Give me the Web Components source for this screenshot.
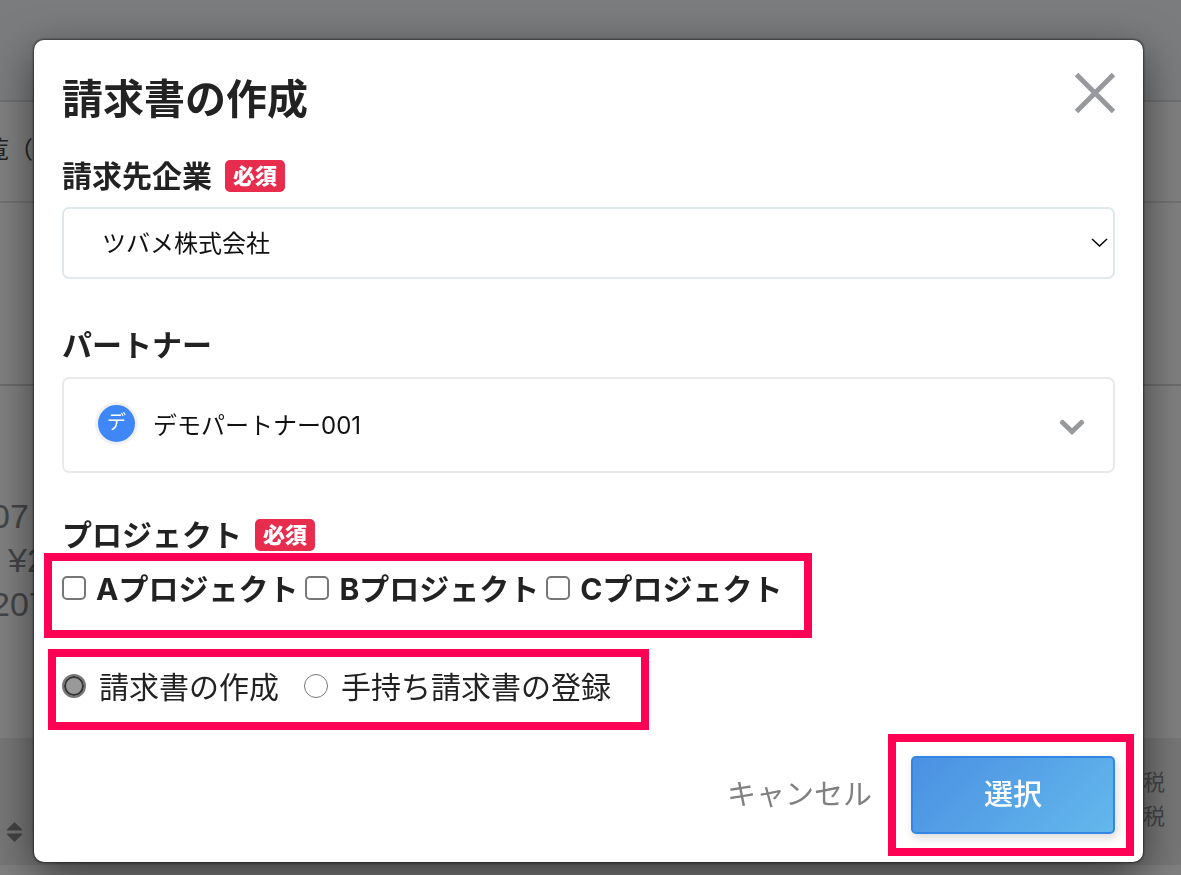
<!DOCTYPE html>
<html lang="ja">
<head>
<meta charset="utf-8">
<meta name="viewport" content="width=device-width, initial-scale=1">
<title>請求書の作成</title>
<style>
  body { margin: 0; font-family: Inter, "Noto Sans CJK JP", sans-serif; color: #222; }
</style>
</head>
<body>
<invoice-page></invoice-page>
<modal-dialog heading="請求書の作成">
  <form-field label="請求先企業" required>
    <company-select></company-select>
  </form-field>
  <form-field label="パートナー">
    <partner-picker initial="デ" name="デモパートナー001"></partner-picker>
  </form-field>
  <form-field label="プロジェクト" required flush>
    <highlight-frame class="projects">
      <choice-group kind="checkbox" name="project" options="Aプロジェクト,Bプロジェクト,Cプロジェクト"></choice-group>
    </highlight-frame>
  </form-field>
  <highlight-frame class="mode">
    <choice-group kind="radio" name="mode" options="請求書の作成,手持ち請求書の登録" selected="0"></choice-group>
  </highlight-frame>
  <dialog-actions slot="actions"></dialog-actions>
</modal-dialog>

<script>
const define = (name, render) => customElements.define(name, class extends HTMLElement {
  connectedCallback() {
    if (this.shadowRoot) return;
    this.attachShadow({ mode: 'open' }).innerHTML =
      '<style>*{box-sizing:border-box} button,select,input{font:inherit;color:inherit;margin:0}</style>' + render(this);
  }
});

define('invoice-page', () => `
<style>
  :host { display: block; height: 100vh; overflow: hidden; background: #808080; color: #444547; }
  .banner { height: 102px; background: #7a7c7e; border-bottom: 2px solid #6f7071; }
  .title { height: 99px; padding: 30px 0; margin-left: -15px; font-size: 24px; line-height: 36px; color: #222; }
  .titlebar { border-bottom: 2px solid #727272; }
  .filters { height: 183px; border-bottom: 2px solid #6c6c6c; }
  .summary { height: 352px; padding-top: 108px; font: 34px/44px "Liberation Sans", "Noto Sans CJK JP", sans-serif; }
  .summary div { margin-left: -9px; }
  .summary .amount { margin-left: 8px; }
  .columns { height: 127px; padding: 27px 16px 0 7px; background: #777; display: flex; justify-content: space-between; font-size: 22px; line-height: 34px; }
  .columns svg { margin-top: 57px; }
</style>
<div class="banner"></div>
<div class="titlebar"><div class="title">覧（</div></div>
<div class="filters"></div>
<div class="summary"><div>07</div><div class="amount">¥2</div><div>207</div></div>
<div class="columns">
  <svg width="15" height="20" viewBox="0 0 15 20" fill="#444547" aria-hidden="true"><path d="M7.500 0 15 7.500V8.500H0V7.500zM0 11.500H15V12.500L7.500 20 0 12.500z"/></svg>
  <div><div>税</div><div>税</div></div>
</div>`);

define('modal-dialog', el => `
<style>
  :host { display: block; position: fixed; inset: 0; overflow: hidden; padding: 40px 38px 0 34px; }
  section { background: #fff; border-radius: 10px; padding: 29px 28px 6px; box-shadow: 0 0 2px 1px rgba(0,0,0,.5), 0 14px 44px rgba(0,0,0,.55); }
  header { display: flex; justify-content: space-between; align-items: flex-start; margin-bottom: 29px; }
  h1 { margin: 0; font-size: 41px; line-height: 60px; font-weight: 700; }
  button { display: flex; padding: 0; margin-top: 4px; border: 0; background: none; }
</style>
<section role="dialog" aria-modal="true" aria-labelledby="h">
  <header><h1 id="h">${el.getAttribute('heading')}</h1>
    <button type="button" aria-label="閉じる"><svg width="40" height="40" viewBox="0 0 40 40" stroke="#97999c" stroke-width="5"><path d="M1.500 1.500 38.500 38.500M38.500 1.500 1.500 38.500"/></svg></button>
  </header>
  <slot></slot>
  <slot name="actions"></slot>
</section>`);

define('form-field', el => `
<style>
  :host { display: block; margin-bottom: 48px; }
  :host(:not([required])) { margin-bottom: 44px; }
  :host([flush]) { margin-bottom: 11px; }
  .label { display: flex; align-items: center; gap: 13px; height: 36px; margin-bottom: 14px; font-size: 30px; font-weight: 700; line-height: 36px; }
  :host([flush]) .label { margin-bottom: 0; }
  .badge { padding: 0 8px; border-radius: 5px; background: #e82c4d; color: #fff; font-size: 22px; line-height: 32px; font-weight: 900; }
</style>
<div role="group" aria-labelledby="l">
  <div class="label"><span id="l">${el.getAttribute('label')}</span>${el.hasAttribute('required') ? '<span class="badge">必須</span>' : ''}</div>
  <slot></slot>
</div>`);

define('company-select', () => `
<style>
  :host { display: grid; align-items: center; margin-top: -1px; }
  select { grid-area: 1 / 1; width: 100%; height: 72px; padding: 0 38px; appearance: none; border: 2px solid #dfe8eb; border-radius: 7px; background: #fff; font-size: 24px; color: #111; }
  svg { grid-area: 1 / 1; justify-self: end; margin-right: 7px; pointer-events: none; }
</style>
<select aria-label="請求先企業"><option>ツバメ株式会社</option></select>
<svg width="17" height="10" viewBox="0 0 17 10" fill="none" stroke="#000" stroke-width="1.500" aria-hidden="true"><path d="M1 1 8.500 8 16 1"/></svg>`);

define('partner-picker', el => `
<style>
  :host { display: block; }
  button { display: flex; align-items: center; width: 100%; height: 96px; padding: 0 28px 4px 31px; border: 2px solid #e9e9e9; border-radius: 7px; background: #fff; font-size: 24px; color: #111; text-align: left; }
  .avatar { width: 43px; height: 43px; border: 3px solid #f1f1f1; border-radius: 50%; background: #3f86f6; color: #fff; font-size: 19px; line-height: 36px; text-align: center; }
  .name { flex: 1; margin-left: 15px; }
  svg { margin-top: 8px; }
</style>
<button type="button" aria-haspopup="listbox">
  <span class="avatar">${el.getAttribute('initial')}</span>
  <span class="name">${el.getAttribute('name')}</span>
  <svg width="26" height="18" viewBox="0 0 26 18" fill="none" stroke="#97999c" stroke-width="5" stroke-linecap="round" aria-hidden="true"><path d="M3.500 4.500 13 13.500 22.500 4.500"/></svg>
</button>`);

define('highlight-frame', () => `
<style>
  :host { display: block; width: fit-content; box-sizing: border-box; border: 8px solid #ff0054; }
  :host(.projects) { margin-left: -18px; padding: 7px 22px 22px 10px; }
  :host(.mode) { margin: 0 0 4px -14px; padding: 9px 30px 16px 6px; }
  :host(.submit) { padding: 14px 11px 14px 15px; }
</style><slot></slot>`);

define('choice-group', el => {
  const kind = el.getAttribute('kind');
  return `
<style>
  :host { display: flex; height: 40px; align-items: center; gap: 7px; font-size: 30px; line-height: 40px; }
  :host([kind="checkbox"]) { font-weight: 700; }
  :host([kind="radio"]) { gap: 25px; }
  label { display: flex; align-items: center; gap: 10px; height: 40px; white-space: nowrap; }
  :host([kind="radio"]) label { gap: 13px; }
  span { padding-top: 2px; }
  input { appearance: none; width: 24px; height: 24px; border: 2px solid #777; background: #fff; }
  input[type=checkbox] { border-radius: 5px; }
  input[type=radio] { border-width: 1px; border-radius: 50%; }
  input[type=radio]:checked { border: 2px solid #777; background: #999; box-shadow: inset 0 0 0 2px #333; }
</style>` + el.getAttribute('options').split(',').map((text, i) =>
    `<label><input type="${kind}" name="${el.getAttribute('name')}"${el.getAttribute('selected') === String(i) ? ' checked' : ''}><span>${text}</span></label>`).join('');
});

define('dialog-actions', () => `
<style>
  :host { display: flex; justify-content: flex-end; align-items: center; gap: 16px; margin-right: -19px; }
  button { padding: 0; border: 0; background: none; font-size: 29px; line-height: 40px; color: #808080; }
  .primary { display: block; width: 204px; height: 78px; border: 2px solid #3486e4; border-radius: 5px; background: linear-gradient(135deg, #4a90e2, #63b8ec); color: #fff; font-weight: 500; box-shadow: 2px 4px 10px rgba(0,0,0,.15); }
</style>
<button type="button">キャンセル</button>
<highlight-frame class="submit"><button class="primary" type="button">選択</button></highlight-frame>`);
</script>
</body>
</html>
